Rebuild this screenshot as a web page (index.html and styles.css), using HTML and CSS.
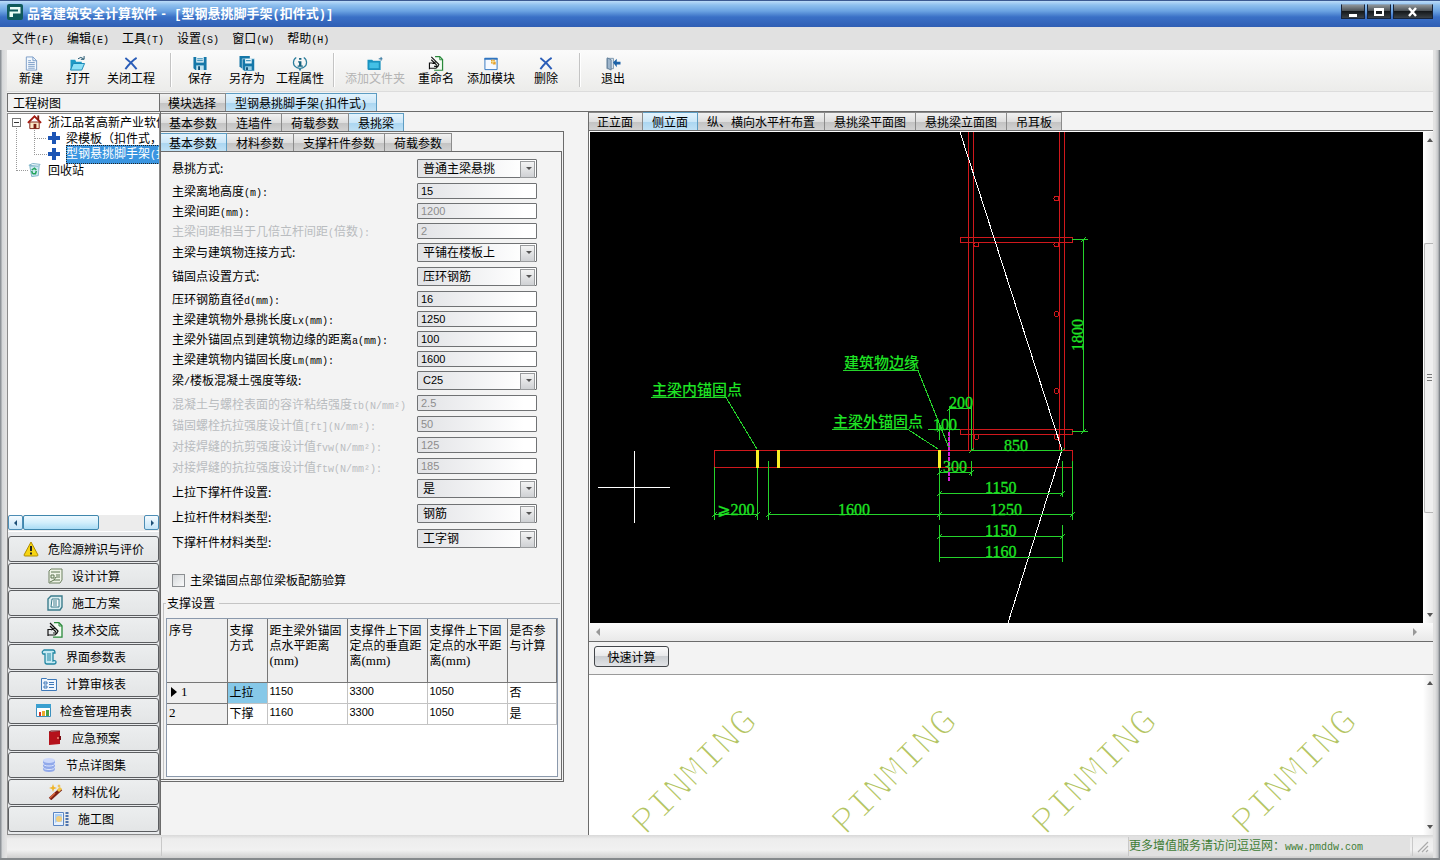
FILE: index.html
```
<!DOCTYPE html>
<html lang="zh-CN">
<head>
<meta charset="utf-8">
<title>品茗建筑安全计算软件</title>
<link rel="stylesheet" href="styles.css">
</head>
<body>
<svg class="defs" aria-hidden="true">
  <symbol id="i-cross" viewBox="0 0 16 16"><path d="M2 2c4 3 9 8 12 12M14 2C9 5 5 10 2 14" fill="none" stroke="#2a5db8" stroke-width="2"/></symbol>
  <symbol id="i-rename" viewBox="0 0 16 16"><path d="M7 .7h5l3 3v11.500H6" fill="#f4fbf4" stroke="#2a8a3a" stroke-width="1.300"/><path d="M12 1v3h3" fill="none" stroke="#2a8a3a"/><path d="M1 7v7M1 7.500h3M1 13h7l2-2" fill="none" stroke="#111" stroke-width="1.200"/><path d="M3 1l8 8M3 4l6 6M4 8l4-2 3 3-1 2H6" fill="none" stroke="#111" stroke-width="1.200"/></symbol>
  <symbol id="i-floppy" viewBox="0 0 16 16"><path d="M1 1h14v14H3l-2-2z" fill="#1577a8"/><path d="M4 1h8v6H4z" fill="#eef8fc"/><path d="M5 3h6M5 5h6" stroke="#1577a8"/><path d="M4 10h8v5H4z" fill="#bfe3f1"/><path d="M6 11h2v4H6z" fill="#0d4d75"/></symbol>
  <symbol id="i-plus" viewBox="0 0 12 12"><path d="M4 0h4v4h4v4H8v4H4V8H0V4h4z" fill="#1c55b5"/></symbol>
</svg>

<div class="window">
  <header class="titlebar">
    <svg class="logo" viewBox="0 0 16 16"><rect width="16" height="16" rx="2" fill="#0f5a5c"/><path d="M3 3h10.500v6.500H6V13H2.500V7.500H11v-2H3z" fill="#eafcf6"/></svg>
    <h1>品茗建筑安全计算软件 <span>- [</span>型钢悬挑脚手架<span>(</span>扣件式<span>)]</span></h1>
    <div class="win-controls">
      <button aria-label="最小化"><svg viewBox="0 0 12 12"><path d="M2 8h8v3H2z" fill="#fff"/></svg></button>
      <button aria-label="最大化"><svg viewBox="0 0 12 12"><path d="M1 2h10v8H1zM3 5v3h6V5z" fill="#fff" fill-rule="evenodd"/></svg></button>
      <button class="close" aria-label="关闭"><svg viewBox="0 0 12 12"><path d="M2 2l7 8M9 2l-7 8" stroke="#fff" stroke-width="2.4"/></svg></button>
    </div>
  </header>

  <nav class="menubar">
    <button>文件<span class="en">(F)</span></button><button>编辑<span class="en">(E)</span></button><button>工具<span class="en">(T)</span></button><button>设置<span class="en">(S)</span></button><button>窗口<span class="en">(W)</span></button><button>帮助<span class="en">(H)</span></button>
  </nav>

  <div class="toolbar">
    <div class="tool-group loose">
      <button><svg viewBox="0 0 16 16"><path d="M3 1h7l4 4v10H3z" fill="#f3f8fd" stroke="#7a9cc6"/><path d="M10 1v4h4M5 5h3M5 7h7M5 9h7M5 11h7M5 13h7" fill="none" stroke="#7a9cc6"/></svg>新建</button>
      <button><svg viewBox="0 0 16 16"><path d="M0 4h5l1 2h6v9H0z" fill="#1f9ac6"/><path d="M3 8h12l-3 7H0z" fill="#8fe0f7" stroke="#1785b4"/><path d="M8 3q3-3 6 0M14.500 0v3.500H11" fill="none" stroke="#1a4f6a"/></svg>打开</button>
      <button><svg><use href="#i-cross"/></svg>关闭工程</button>
    </div>
    <div class="tool-group">
      <button><svg><use href="#i-floppy"/></svg>保存</button>
      <button><svg viewBox="0 0 16 16"><path d="M0 0h11v13H2l-2-2z" fill="#1577a8"/><path d="M3 3h13v13H5l-2-2z" fill="#1577a8" stroke="#e8f4fa" stroke-width=".6"/><path d="M6 3h7v5H6z" fill="#e6f6fc"/><path d="M7 5h5" stroke="#1577a8"/><path d="M6 11h7v4H6z" fill="#9bd0e6"/><path d="M7 12h2v3H7z" fill="#0d4d75"/></svg>另存为</button>
      <button><svg viewBox="0 0 16 16"><path d="M4 1.500C0 4 0 10 4 12M12 1.500c4 2.500 4 8.500 0 10.500M4 12c1 1 3 1 3 1l1 2 1-2s2 0 3-1" fill="none" stroke="#2d7f9e" stroke-width="1.3"/><path d="M7 2h2.500v2H7zM6 5.500h3.500V10H11v1.500H5.500V10H7V7H6z" fill="#14627f"/></svg>工程属性</button>
    </div>
    <div class="tool-group loose wide-gap">
      <button disabled><svg viewBox="0 0 16 16"><path d="M0 4h5l1 1h8v10H1l-1-1z" fill="#1a93c0"/><path d="M2 7h10v6H2z" fill="#43c0e6"/><path d="M14.500 1v4M12 3h4" stroke="#2a6f9a"/></svg>添加文件夹</button>
      <button><svg><use href="#i-rename"/></svg>重命名</button>
      <button><svg viewBox="0 0 16 16"><path d="M1.500 2.500h13v12h-13z" fill="#f5f9ff" stroke="#2f74c0"/><path d="M1 2h14v2H1z" fill="#2f74c0"/><path d="M8 4h4v2h1v3h-3V8H8z" fill="#e5a02c"/><path d="M10 4v4M8 6h4" stroke="#f9e39a"/></svg>添加模块</button>
      <button><svg><use href="#i-cross"/></svg>删除</button>
    </div>
    <div class="tool-group last">
      <button><svg viewBox="0 0 16 16"><path d="M1.500 2.500h7v11h-7z" fill="#d7e4ef" stroke="#7e97ad"/><path d="M2 2l4 2v11l-4-2z" fill="#9db5cb" stroke="#64809b"/><path d="M8 7l4-4v3h4v3h-4v3z" fill="#1c62a8"/></svg>退出</button>
    </div>
  </div>

  <main class="workspace">
    <aside class="sidebar">
      <h2 class="side-title">工程树图</h2>
      <div class="side-box">
        <ul class="tree">
          <li class="root"><i class="toggle"></i><svg class="tree-icon" viewBox="0 0 16 16"><path d="M3 8h10v7H3z" fill="#fbe9c8" stroke="#7b1d10"/><path d="M1 9l7-7 7 7" fill="none" stroke="#a31a10" stroke-width="2"/><path d="M7 10h3v5H7z" fill="#7b1d10"/><path d="M12 1v5" stroke="#7b1d10" stroke-width="2"/></svg>浙江品茗高新产业软件
            <ul>
              <li><svg class="plus"><use href="#i-plus"/></svg><span>梁模板（扣件式，</span></li>
              <li><svg class="plus"><use href="#i-plus"/></svg><span class="selected">型钢悬挑脚手架<b class="en">(</b>扣件式<b class="en">)</b></span></li>
            </ul>
          </li>
          <li class="bin"><svg class="tree-icon" viewBox="0 0 16 16"><path d="M3 4l10-1-1 11-7 1z" fill="#cde9f3" stroke="#7fb3c8"/><path d="M2 3l4-2 8 1-2 2z" fill="#e9f6fa" stroke="#7fb3c8"/><path d="M5 8l3-2 2 2M10 9l-1 3H6M6 12L5 9" fill="none" stroke="#22a35a" stroke-width="1.600"/></svg>回收站</li>
        </ul>
        <div class="tree-scroll">
          <button aria-label="向左"><svg viewBox="0 0 8 8"><path d="M5 1v6L2 4z" fill="#1d4f77"/></svg></button><div class="thumb"></div><button aria-label="向右"><svg viewBox="0 0 8 8"><path d="M3 1v6l3-3z" fill="#1d4f77"/></svg></button>
        </div>
        <nav class="side-nav">
          <button><svg viewBox="0 0 16 16"><path d="M8 1l7 13q0 1-1 1H2q-1 0-1-1z" fill="#f7d512" stroke="#b08c00"/><path d="M8 5v5M8 11.500v2" stroke="#222" stroke-width="2"/></svg>危险源辨识与评价</button>
          <button><svg viewBox="0 0 16 16"><path d="M4 1h11v11l-2 3H2V3z" fill="#eef3e6" stroke="#6c8060"/><path d="M4 4h9M4 7h3v3H4zM9 7h4M7 12l2-3h4M3 14l4-2h6" fill="none" stroke="#5d7550"/></svg>设计计算</button>
          <button><svg viewBox="0 0 16 16"><path d="M4 1h11v11l-2 3H1V4z" fill="#d9edf0" stroke="#3b7c8c" stroke-width="1.400"/><path d="M5 4h7v8H4z" fill="#fff" stroke="#3b7c8c"/><path d="M6 6h4M6 8h4M6 10h4" stroke="#3b7c8c"/></svg>施工方案</button>
          <button><svg><use href="#i-rename"/></svg>技术交底</button>
          <button><svg viewBox="0 0 16 16"><path d="M3 1h9q2 0 2 3h-2v8q3-1 3 1t-2 2H6q-2 0-2-2V5H2Q0 3 3 1z" fill="#c6eaf3" stroke="#2387a2" stroke-width="1.300"/><path d="M6 5h4M6 7h4M6 9h4M6 11h4" stroke="#2387a2"/></svg>界面参数表</button>
          <button><svg viewBox="0 0 16 16"><path d="M.5 2.500h5l1 1h9v11H.5z" fill="#eef5fd" stroke="#3e79b8"/><path d="M3 6h3v2H3zM3 10h3v2H3zM8 6.500h5M8 8.500h5M8 11.500h5" fill="none" stroke="#3e79b8"/></svg>计算审核表</button>
          <button><svg viewBox="0 0 16 16"><path d="M1.500 1.500h14v12h-14z" fill="#fff" stroke="#3c90be"/><path d="M1 1h15v4H1z" fill="#3ba0d0"/><path d="M4 9h2v4H4z" fill="#d4352b"/><path d="M7 8h3v5H7z" fill="#edaa2a"/><path d="M11 7h3v6h-3z" fill="#49a047"/></svg>检查管理用表</button>
          <button><svg viewBox="0 0 16 16"><path d="M2 2l11-1v13L2 15z" fill="#b5121b"/><path d="M2 2l2-1h9" stroke="#6f0a10" fill="none"/><path d="M12 6h2v4h-2" fill="#7a0c12"/><circle cx="11" cy="8" r="1" fill="#ef8f75"/></svg>应急预案</button>
          <button><svg viewBox="0 0 16 16"><path d="M2 3v9q0 3 6 3t6-3V3z" fill="#91a9ea"/><ellipse cx="8" cy="3.500" rx="6" ry="2.500" fill="#ccd8fa"/><path d="M2 6q0 3 6 3t6-3M2 9.500q0 3 6 3t6-3" fill="none" stroke="#dfe7fd"/></svg>节点详图集</button>
          <button><svg viewBox="0 0 16 16"><path d="M3 15L14 5" stroke="#7c2013" stroke-width="3.500"/><path d="M3 14l5-5" stroke="#d96438" stroke-width="1.500"/><path d="M11 7l3-3" stroke="#f1c545" stroke-width="3"/><path d="M6 0l1 3 3 1-3 1-1 3-1-3-3-1 3-1zM12 0l.6 1.500 1.400.5-1.400.5L12 4l-.6-1.500L10 2l1.400-.5z" fill="#efb429"/></svg>材料优化</button>
          <button><svg viewBox="0 0 16 16"><path d="M.5 1.500h10v13H.5z" fill="#e7f1fd" stroke="#5a86c4"/><path d="M2 3h7v8q-4-2-7 1z" fill="#a9cdf4"/><circle cx="6" cy="8" r="3" fill="#f1ce7c"/><path d="M14 1v14" stroke="#4d74ad" stroke-width="3" stroke-dasharray="2 1"/></svg>施工图</button>
        </nav>
      </div>
    </aside>

    <div class="content">
      <div class="tabs module-tabs" role="tablist"><button>模块选择</button><button class="active">型钢悬挑脚手架<span class="en">(</span>扣件式<span class="en">)</span></button></div>
      <div class="columns">
        <section class="params">
          <div class="tabs" role="tablist"><button>基本参数</button><button>连墙件</button><button>荷载参数</button><button class="active">悬挑梁</button></div>
          <div class="page outer">
            <div class="tabs" role="tablist"><button class="active">基本参数</button><button>材料参数</button><button>支撑杆件参数</button><button>荷载参数</button></div>
            <div class="page inner">
              <form class="form">
                <div class="field tall"><label for="f1">悬挑方式:</label><span class="select"><select id="f1"><option>普通主梁悬挑</option></select></span></div>
                <div class="field"><label for="f2">主梁离地高度<span class="en">(m):</span></label><input id="f2" value="15"></div>
                <div class="field"><label for="f3">主梁间距<span class="en">(mm):</span></label><input id="f3" value="1200" disabled></div>
                <div class="field off"><label for="f4">主梁间距相当于几倍立杆间距<span class="en">(</span>倍数<span class="en">):</span></label><input id="f4" value="2" disabled></div>
                <div class="field tall"><label for="f5">主梁与建筑物连接方式:</label><span class="select"><select id="f5"><option>平铺在楼板上</option></select></span></div>
                <div class="field tall"><label for="f6">锚固点设置方式:</label><span class="select"><select id="f6"><option>压环钢筋</option></select></span></div>
                <div class="field"><label for="f7">压环钢筋直径<span class="en">d(mm):</span></label><input id="f7" value="16"></div>
                <div class="field"><label for="f8">主梁建筑物外悬挑长度<span class="en">Lx(mm):</span></label><input id="f8" value="1250"></div>
                <div class="field"><label for="f9">主梁外锚固点到建筑物边缘的距离<span class="en">a(mm):</span></label><input id="f9" value="100"></div>
                <div class="field"><label for="f10">主梁建筑物内锚固长度<span class="en">Lm(mm):</span></label><input id="f10" value="1600"></div>
                <div class="field tall"><label for="f11">梁<span class="en">/</span>楼板混凝土强度等级:</label><span class="select"><select id="f11" class="num"><option>C25</option></select></span></div>
                <div class="field off mid"><label for="f12">混凝土与螺栓表面的容许粘结强度<span class="en">τb(N/mm²)</span></label><input id="f12" value="2.5" disabled></div>
                <div class="field off mid"><label for="f13">锚固螺栓抗拉强度设计值<span class="en">[ft](N/mm²):</span></label><input id="f13" value="50" disabled></div>
                <div class="field off mid"><label for="f14">对接焊缝的抗剪强度设计值<span class="en">fvw(N/mm²):</span></label><input id="f14" value="125" disabled></div>
                <div class="field off mid"><label for="f15">对接焊缝的抗拉强度设计值<span class="en">ftw(N/mm²):</span></label><input id="f15" value="185" disabled></div>
                <div class="field roomy"><label for="f16">上拉下撑杆件设置:</label><span class="select"><select id="f16"><option>是</option></select></span></div>
                <div class="field roomy"><label for="f17">上拉杆件材料类型:</label><span class="select"><select id="f17"><option>钢筋</option></select></span></div>
                <div class="field roomy"><label for="f18">下撑杆件材料类型:</label><span class="select"><select id="f18"><option>工字钢</option></select></span></div>
                <div class="check"><input type="checkbox" id="chk"><label for="chk">主梁锚固点部位梁板配筋验算</label></div>
              </form>
              <fieldset class="support">
                <legend>支撑设置</legend>
                <div class="grid-box">
                  <table>
                    <thead><tr><th class="c-no">序号</th><th class="c-way">支撑方式</th><th class="c-d">距主梁外锚固点水平距离<span class="rm">(mm)</span></th><th class="c-d">支撑件上下固定点的垂直距离<span class="rm">(mm)</span></th><th class="c-d">支撑件上下固定点的水平距离<span class="rm">(mm)</span></th><th>是否参与计算</th></tr></thead>
                    <tbody>
                      <tr><th><span class="marker"></span>1</th><td class="picked">上拉</td><td class="n">1150</td><td class="n">3300</td><td class="n">1050</td><td>否</td></tr>
                      <tr><th>2</th><td>下撑</td><td class="n">1160</td><td class="n">3300</td><td class="n">1050</td><td>是</td></tr>
                    </tbody>
                  </table>
                </div>
              </fieldset>
            </div>
          </div>
        </section>

        <section class="viewer">
          <div class="tabs" role="tablist"><button>正立面</button><button class="active">侧立面</button><button>纵、横向水平杆布置</button><button>悬挑梁平面图</button><button>悬挑梁立面图</button><button>吊耳板</button></div>
          <div class="canvas">
            <svg class="drawing" viewBox="590 132 833 491" preserveAspectRatio="xMinYMin slice">
              <g class="red">
                <path d="M968.5 132V450M973.5 132V450M1059.5 132V450M1064.5 132V450"/>
                <path d="M960.5 237.500H1072.500V242.500H960.500zM960.500 429.500H1072.500V434.500H960.500zM714.500 450.500H1072.500V467.500H714.500z"/>
                <circle cx="1056.500" cy="198.500" r="2.500"/><circle cx="1056.500" cy="244.500" r="2.500"/><circle cx="976.500" cy="244.500" r="2.500"/><circle cx="1056.500" cy="314" r="2.500"/><circle cx="1056.500" cy="391" r="2.500"/><circle cx="976.500" cy="437" r="2.500"/><circle cx="1056.500" cy="437" r="2.500"/>
              </g>
              <path class="white" d="M960 132L1062 450L1008 623M598 487.500H670M634.500 451V523"/>
              <g class="green">
                <path d="M714.500 467V520M757.500 460V520M768.500 461V520M714 514.500H758M768 514.500H1073"/>
                <path d="M712 517l5-5M755 517l5-5M766 517l5-5M937 517l5-5M1070 517l5-5"/>
                <path d="M651 397.500H726L757 449M843 370.500H918L949 448M832 429.500H908L938 449"/>
                <path d="M949.500 406V450M971.500 406V450M949 408.500H972M928 429.500H960M939.500 424V440M939 472.500H972M971.500 461V476M971 450.500H1062"/>
                <path d="M939.500 468V520M939.500 525V562M1062.500 461V497M1062.500 525V562M1072.500 461V520M939 493.500H1062M939 536.500H1062M939 557.500H1063"/>
                <path d="M937 496l5-5M1060 496l5-5M937 539l5-5M1060 539l5-5M937 475l5-5M969 475l5-5M969 453l5-5M1060 453l5-5M947 411l5-5M937 432l5-5"/>
                <path d="M1083.500 239V432M1072 239.500H1088M1072 431.500H1088M1081 242l5-5M1081 434l5-5"/>
              </g>
              <path class="magenta" d="M949 432V482"/>
              <path class="yellow" d="M757.500 450V468M778.500 450V468M939 450V468"/>
              <g class="dims">
                <text class="cn" x="652" y="395">主梁内锚固点</text><text class="cn" x="844" y="368">建筑物边缘</text><text class="cn" x="833" y="427">主梁外锚固点</text>
                <text x="717" y="515"><tspan class="ge">⩾</tspan>200</text><text x="838" y="515">1600</text><text x="990" y="515">1250</text>
                <text x="949" y="408">200</text><text x="933" y="430">100</text><text x="943" y="472">300</text><text x="1004" y="451">850</text>
                <text x="985" y="493">1150</text><text x="985" y="536">1150</text><text x="985" y="557">1160</text>
                <text transform="translate(1083 351) rotate(-90)">1800</text>
              </g>
            </svg>
            <div class="vscroll"><i class="up"></i><div class="vthumb"><span></span></div><i class="down"></i></div>
          </div>
          <div class="hscroll"><i class="left"></i><i class="right"></i></div>
          <div class="calc-bar"><button>快速计算</button></div>
          <div class="result">
            <svg class="watermark" viewBox="590 675 833 160" preserveAspectRatio="xMinYMin slice">
              <text transform="translate(646 836) rotate(-45)">PINMING</text><text transform="translate(846 836) rotate(-45)">PINMING</text><text transform="translate(1046 836) rotate(-45)">PINMING</text><text transform="translate(1246 836) rotate(-45)">PINMING</text>
            </svg>
            <div class="vscroll"><i class="up"></i><i class="down"></i></div>
          </div>
        </section>
      </div>
    </div>
  </main>

  <footer class="statusbar">
    <div class="cell first"></div><div class="cell wide"></div>
    <div class="cell link"><a href="#">更多增值服务请访问逗逗网：<span class="en">www.pmddw.com</span></a></div>
    <div class="cell grip"><svg viewBox="0 0 12 12"><path d="M1 11L11 1M5 11l6-6M9 11l2-2" stroke="#aaa" stroke-width="1.200"/></svg></div>
  </footer>
</div>
</body>
</html>
```

FILE: styles.css
```
* { box-sizing: border-box; }
body {
  margin: 0;
  font: 12px/14px "Noto Sans CJK SC", sans-serif;
  color: #000;
  background: #f3f3f3;
}
button, input, select, legend { font: inherit; color: inherit; }
button { border: 0; padding: 0; background: none; white-space: nowrap; }
h1, h2, ul { margin: 0; padding: 0; font-size: 12px; font-weight: 400; list-style: none; }
.defs { position: absolute; width: 0; height: 0; }
.en { font-family: "Liberation Mono", monospace; font-size: 10px; font-weight: 400; }

.window {
  display: flex;
  flex-direction: column;
  min-height: 100vh;
  background: linear-gradient(90deg, #8f9499 0 1px, #d4d6d8 2px, #e2e2e2 6px, #e2e2e2 calc(100% - 5px), #c2c4c6 calc(100% - 2px), #6b7177 100%);
  border-bottom: 2px solid #85898c;
}

/* title bar */
.titlebar {
  display: flex;
  align-items: flex-start;
  height: 27px;
  padding: 3px 7px 0;
  border-top: 1px solid #3c5a92;
  background: linear-gradient(#bcdcf8 0, #8fc0ee 4px, #6ba3e2 10px, #3a70c6 16px, #2f5eb4 100%);
}
.logo { width: 16px; height: 16px; }
.titlebar h1 { flex: 1; margin-left: 4px; font-size: 13px; line-height: 17px; font-weight: 700; color: #fff; white-space: pre; }
.titlebar h1 span { font-family: "Liberation Mono", monospace; font-size: 12px; }
.win-controls { display: flex; gap: 2px; }
.win-controls button {
  width: 24px;
  height: 15px;
  line-height: 0;
  border: 1px solid #16233a;
  border-top-color: #8ba3b9;
  background: linear-gradient(#8d9499 0, #4c5256 45%, #15191c 50%, #3a4146 100%);
}
.win-controls .close { width: 40px; }
.win-controls svg { width: 12px; height: 12px; }

/* menu and toolbar */
.menubar { display: flex; gap: 13px; height: 23px; padding-left: 12px; background: #e1e1e1; }
.menubar button { line-height: 22px; }
.toolbar {
  display: flex;
  height: 42px;
  margin: 0 7px;
  padding: 3px 0 4px 1px;
  background: linear-gradient(#fbfbfb, #ececea);
  border-bottom: 1px solid #dcdcdc;
}
.tool-group { display: flex; gap: 1px; padding: 0 4px 0 6px; border-right: 1px solid #c4c4c4; box-shadow: 1px 0 #fff; }
.tool-group:first-child { padding-left: 0; }
.loose { padding-right: 10px; }
.wide-gap { gap: 3px; }
.last { border: 0; box-shadow: none; padding-left: 10px; }
.toolbar button { display: flex; flex-direction: column; align-items: center; min-width: 46px; padding: 3px 5px 0; line-height: 14px; }
.toolbar button svg { width: 16px; height: 15px; flex: none; }
.toolbar button:disabled { color: #b4b4b4; }

/* frame columns */
.workspace { flex: 1; display: flex; margin: 0 7px; background: #f3f3f3; }
.sidebar { flex: 0 0 153px; min-width: 0; display: flex; flex-direction: column; padding-top: 1px; }
.side-title { height: 19px; padding-left: 5px; line-height: 17px; border: 1px solid #6e6e6e; background: #f3f3f3; }
.side-box { flex: 1; display: flex; flex-direction: column; margin-top: 1px; border: 1px solid #8a8a8a; background: #fff; min-width: 0; }
.content { flex: 1; min-width: 0; display: flex; flex-direction: column; }
.columns { flex: 1; display: flex; }

/* project tree */
.tree { flex: 1; padding: 0 0 0 3px; overflow: hidden; white-space: nowrap; line-height: 16px; }
.tree li { position: relative; }
.root { padding-left: 37px; height: 48px; }
.root ul li { height: 16px; display: flex; align-items: center; }
.root > .tree-icon, .bin .tree-icon { position: absolute; left: 16px; top: 0; }
.bin { padding-left: 37px; }
.tree-icon { width: 15px; height: 16px; }
.plus { width: 12px; height: 12px; margin-right: 6px; flex: none; }
.selected { color: #fff; background: #3a95e0; outline: 1px dotted #222; outline-offset: -1px; }
.toggle { position: absolute; left: 1px; top: 4px; width: 9px; height: 9px; border: 1px solid #777; background: linear-gradient(#333, #333) 1px 3px / 5px 1px no-repeat #fff; z-index: 1; }
.root::before { content: ""; position: absolute; left: 5px; top: 12px; width: 11px; height: 44px; border-left: 1px dotted #999; border-bottom: 1px dotted #999; }
.root ul::before { content: ""; position: absolute; left: 23px; top: 16px; width: 12px; height: 24px; border-left: 1px dotted #999; border-bottom: 1px dotted #999; }
.root ul::after { content: ""; position: absolute; left: 23px; top: 24px; width: 12px; border-bottom: 1px dotted #999; }
.tree-scroll { display: flex; height: 16px; margin-bottom: 1px; background: #ececec; }
.tree-scroll button { width: 15px; height: 15px; line-height: 0; border: 1px solid #4c8db5; border-radius: 2px; background: linear-gradient(#f5fbff, #c4e4f7); }
.tree-scroll svg { width: 8px; height: 8px; }
.tree-scroll .thumb { width: 76px; height: 15px; border: 1px solid #3f87ad; border-radius: 2px; background: linear-gradient(#eef9ff, #d3effc 50%, #a9dcf5); }
.tree-scroll button:last-child { margin-left: auto; }

.side-nav { display: flex; flex-direction: column; gap: 1px; padding: 4px 0 2px; background: #e9ebed; }
.side-nav button {
  display: flex;
  align-items: center;
  justify-content: center;
  gap: 9px;
  height: 26px;
  border: 1px solid #5b5d60;
  border-radius: 3px;
  background: linear-gradient(#eceeef, #e3e5e6);
}
.side-nav svg { width: 16px; height: 16px; }

/* tabs */
.tabs { display: flex; height: 18px; }
.tabs button { padding: 0 9px; line-height: 17px; border: solid #8b8b8b; border-width: 1px 1px 0 0; background: linear-gradient(#f1f1f1 0, #dedede 50%, #c3c3c3 54%, #d2d2d2 100%); }
.params .tabs button:first-child, .viewer .tabs button:first-child, .module-tabs button:first-child { padding-left: 8px; }
.tabs .active { border-color: #5d9cc2; background: linear-gradient(#e3f3fd 0, #cce7f8 50%, #abd6f1 54%, #c0e1f5 100%); }
.module-tabs { height: 20px; padding-top: 1px; border-bottom: 1px solid #6b6b6b; }

/* parameter column */
.params { flex: 0 0 428px; padding: 1px 24px 53px 0; border-left: 1px solid #6b6b6b; display: flex; flex-direction: column; }
.page { border: 1px solid #6b6b6b; border-left: 0; display: flex; flex-direction: column; }
.outer { flex: 1; padding: 1px 1px 1px 0; }
.inner { flex: 1; }
.form { padding: 7px 24px 0 11px; }
.field { display: flex; align-items: flex-start; height: 20px; }
.field label { flex: 1; min-width: 0; white-space: nowrap; line-height: 15px; }
.tall { height: 24px; }
.tall label { line-height: 18px; }
.mid { height: 21px; }
.mid label { line-height: 18px; }
.roomy { height: 25px; }
.roomy label { line-height: 26px; }
.off label { color: #b9bcbf; }
.field input, .select { flex: 0 0 120px; width: 120px; }
.field input {
  height: 16px;
  padding: 0 3px;
  font: 11px/14px "Liberation Sans", sans-serif;
  border: 1px solid #707274;
  border-radius: 1px;
  background: linear-gradient(90deg, #e2e3e6, #fff 90%);
}
.field input:disabled { color: #8d8d8d; }
.select { position: relative; height: 19px; }
select { appearance: none; width: 100%; height: 19px; padding: 0 20px 1px 5px; line-height: 16px; border: 1px solid #707274; border-radius: 1px; background: linear-gradient(90deg, #e2e3e6, #fff 90%); }
select.num { font: 11px/16px "Liberation Sans", sans-serif; }
.select::before { content: ""; position: absolute; right: 2px; top: 2px; width: 13px; height: 15px; border: 1px solid #9a9c9e; background: linear-gradient(#f4f4f4, #cfd1d4); pointer-events: none; }
.select::after { content: ""; position: absolute; right: 5px; top: 8px; border: solid transparent; border-width: 3px 3px 0; border-top-color: #555; pointer-events: none; }
.check { display: flex; align-items: center; gap: 5px; margin-top: 18px; height: 16px; }
.check input { appearance: none; width: 13px; height: 13px; margin: 0; border: 1px solid #8c8f92; background: linear-gradient(135deg, #d5d8db, #fafafa); }

/* support table */
.support { flex: 1; display: flex; flex-direction: column; margin: 8px 1px 0 2px; padding: 8px 0 2px 2px; border: 0 solid #c4c4c4; border-width: 1px 0 0 1px; min-width: 0; }
.support legend { padding: 0 4px 0 1px; line-height: 14px; }
.grid-box { flex: 1; margin-right: 2px; border: 1px solid #8b99ac; background: #fff; }
table { width: 100%; table-layout: fixed; border-collapse: collapse; line-height: 15px; }
th, td { padding: 0 2px; text-align: left; vertical-align: top; font-weight: 400; border: 1px solid #c3c3c3; border-width: 0 1px 1px 0; }
th { background: #efefef; border-color: #777; }
thead th { height: 63px; padding-top: 3px; overflow: hidden; }
.c-no { width: 60px; }
.c-way { width: 40px; }
.c-d { width: 80px; }
tbody th, td { height: 21px; line-height: 17px; }
tbody th, .rm { font-family: "Liberation Serif", serif; font-size: 13px; }
.n { font: 11px/17px "Liberation Sans", sans-serif; }
.picked { background: #86c8e8; }
.marker { display: inline-block; margin: 0 4px 2px 2px; border: solid transparent; border-width: 5px 0 5px 6px; border-left-color: #000; vertical-align: middle; }

/* drawing and result column */
.viewer { flex: 1; min-width: 0; display: flex; flex-direction: column; border-left: 1px solid #6b6b6b; }
.canvas { flex: 1; display: flex; border-top: 1px solid #6b6b6b; padding: 1px 0 0 1px; min-height: 0; background: #fdfdfd; }
.drawing { flex: 1; min-width: 0; background: #000; }
.drawing path, .drawing circle { fill: none; stroke-width: 1; shape-rendering: crispEdges; }
.red path, .red circle { stroke: #d0181c; }
.drawing .white { stroke: #fff; }
.green path { stroke: #25d32b; }
.drawing .magenta { stroke: #d41bd4; stroke-width: 2; stroke-dasharray: 4 1; }
.drawing .yellow { stroke: #f8ee25; stroke-width: 3; }
.dims text { fill: #1ee424; font: 16px "Liberation Serif", serif; stroke: #1ee424; stroke-width: .3; }
.dims .cn { font: 500 15px "Noto Sans CJK SC", sans-serif; stroke: none; }
.dims .ge { font-family: "DejaVu Sans", sans-serif; }
.vscroll { flex: 0 0 10px; display: flex; flex-direction: column; align-items: flex-end; justify-content: space-between; padding: 6px 0; background: linear-gradient(90deg, #fff, #e9e9e9); }
.vthumb { width: 9px; height: 270px; border: 1px solid #b5b5b5; border-right: 0; border-radius: 2px 0 0 2px; background: #efefef; display: flex; align-items: center; justify-content: center; }
.vthumb span { width: 5px; height: 7px; background: repeating-linear-gradient(#777 0 1px, transparent 1px 3px); }
.up, .down, .left, .right { width: 0; height: 0; border: solid transparent; }
.up { border-width: 0 3px 4px; border-bottom-color: #555; }
.down { border-width: 4px 3px 0; border-top-color: #555; }
.left { border-width: 4px 4px 4px 0; border-right-color: #999; }
.right { border-width: 4px 0 4px 4px; border-left-color: #999; }
.hscroll { display: flex; align-items: center; justify-content: space-between; height: 19px; padding: 0 16px 0 7px; background: linear-gradient(#fbfbfb, #e9e9e9); border-bottom: 1px solid #6b6b6b; }
.calc-bar { height: 32px; padding: 4px 5px; }
.calc-bar button { width: 75px; height: 21px; line-height: 17px; border: 1px solid #43464a; border-radius: 3px; background: linear-gradient(#fafafa, #e9eaec 45%, #cbced2 50%, #e2e4e7); }
.result { display: flex; height: 161px; padding-left: 1px; border-top: 1px solid #9a9a9a; background: #fff; }
.watermark { flex: 1; min-width: 0; height: 160px; }
.watermark text { font: 38px "Liberation Mono", monospace; fill: #b3c463; stroke: #fff; stroke-width: 1.600; }

/* status bar */
.statusbar { display: flex; gap: 2px; height: 23px; margin: 0 7px; padding: 2px 0; background: linear-gradient(#d8d8d8, #ededed 4px, #f1f1f1 15px, #cfcfcf); }
.cell { border-left: 1px solid #c9c9c9; }
.first { width: 152px; border: 0; }
.wide { flex: 1; }
.link { width: 282px; padding-left: 0; line-height: 15px; background: #e1e1e1; }
.link a { color: #3f7d36; text-decoration: none; }
.grip { width: 21px; padding: 4px 4px 0; }
.grip svg { display: block; width: 12px; height: 12px; }
```
